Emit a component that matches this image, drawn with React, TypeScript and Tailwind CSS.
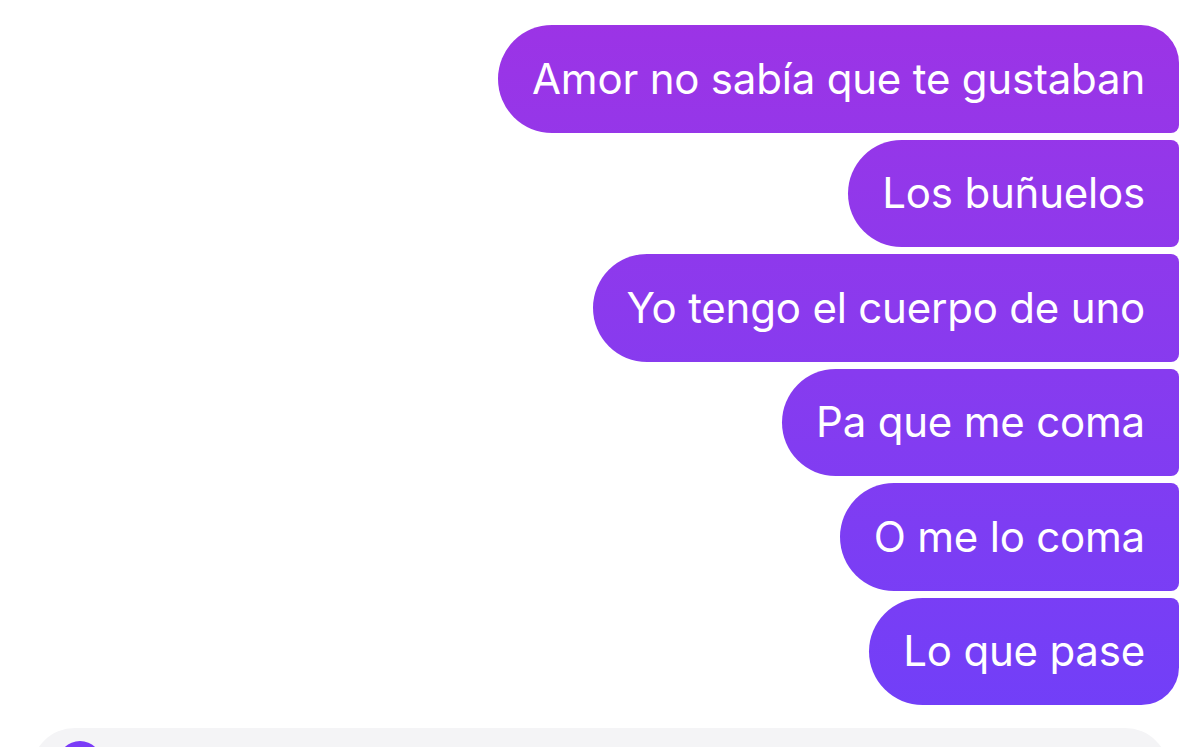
const messages = [
  'Amor no sabía que te gustaban',
  'Los buñuelos',
  'Yo tengo el cuerpo de uno',
  'Pa que me coma',
  'O me lo coma',
  'Lo que pase',
];

function Bubble({ text, first, last }: { text: string; first: boolean; last: boolean }) {
  const corners = `${first ? 'rounded-tr-[38px]' : 'rounded-tr-[8px]'} ${last ? 'rounded-br-[38px]' : 'rounded-br-[8px]'}`;
  return (
    <div
      className={`h-[107.5px] flex items-center px-[34px] rounded-l-[54px] ${corners} bg-fixed bg-linear-to-b from-[#9d33e5] to-[#6f3ff9] text-white text-[42px] leading-none tracking-[-0.2px]`}
    >
      {text}
    </div>
  );
}

export default function App() {
  return (
    <div
      className="w-[1200px] h-[747px] overflow-hidden bg-white flex flex-col"
      style={{ fontFamily: 'Inter, "Noto Sans", sans-serif' }}
    >
      <div className="flex flex-col items-end gap-[7px] pt-[25px] pr-[21px]">
        {messages.map((m, i) => (
          <Bubble key={m} text={m} first={i === 0} last={i === messages.length - 1} />
        ))}
      </div>
      <div className="mt-[23px] mx-[31px] h-[80px] rounded-t-[44px] bg-[#f4f4f6] pt-[13px] pl-[27px]">
        <div className="w-[44px] h-[44px] rounded-full bg-[#7a3bf7]" />
      </div>
    </div>
  );
}
